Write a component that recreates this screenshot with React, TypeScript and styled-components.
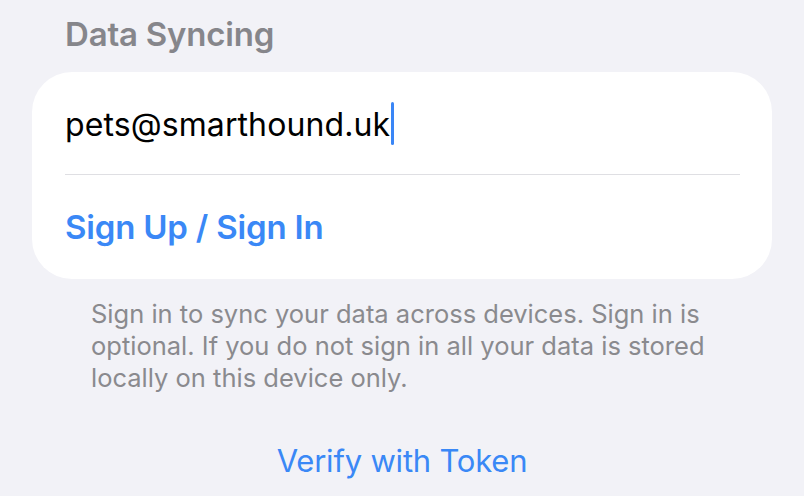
import styled, { createGlobalStyle } from "styled-components";

const GlobalStyle = createGlobalStyle`
  html, body {
    margin: 0;
    padding: 0;
    background: #f2f2f7;
  }
  body {
    font-family: "Inter", "Noto Sans", "Liberation Sans", sans-serif;
    -webkit-font-smoothing: antialiased;
  }
`;

const Page = styled.div`
  width: 804px;
  height: 496px;
  box-sizing: border-box;
  padding: 14px 32px 0;
  display: flex;
  flex-direction: column;
  overflow: hidden;
`;

const SectionTitle = styled.h2`
  margin: 0 0 18px;
  padding-left: 33px;
  font-size: 33px;
  line-height: 40px;
  font-weight: 600;
  color: #86868b;
  letter-spacing: -0.2px;
`;

const Card = styled.div`
  background: #ffffff;
  border-radius: 40px;
  padding: 0 32px 0 33px;
  display: flex;
  flex-direction: column;
`;

const Row = styled.div<{ $divider?: boolean }>`
  height: ${(p) => (p.$divider ? 102 : 104)}px;
  display: flex;
  align-items: center;
  border-bottom: ${(p) => (p.$divider ? "1px solid #dfdfe3" : "none")};
`;

const EmailText = styled.span`
  font-size: 32px;
  color: #000;
  letter-spacing: 0.1px;
  display: flex;
  align-items: center;
  padding-top: 3px;
`;

const Caret = styled.span`
  display: inline-block;
  width: 3px;
  height: 43px;
  margin-left: 1px;
  margin-top: -3px;
  border-radius: 2px;
  background: #3a86f6;
`;

const LinkButton = styled.button`
  border: none;
  background: none;
  padding: 0;
  font-family: inherit;
  font-size: 33px;
  font-weight: 600;
  color: #3a88f6;
  letter-spacing: -0.2px;
  cursor: pointer;
`;

const Footer = styled.p`
  margin: 19px 0 0;
  padding-left: 59px;
  font-size: 25.5px;
  line-height: 32px;
  color: #8a8a8e;
  letter-spacing: 0;
`;

const CenterAction = styled.button`
  margin-top: 47px;
  align-self: center;
  border: none;
  background: none;
  padding: 0;
  font-family: inherit;
  font-size: 31px;
  line-height: 40px;
  color: #3a88f6;
  letter-spacing: -0.2px;
  cursor: pointer;
`;

export default function App() {
  return (
    <>
      <GlobalStyle />
      <Page>
        <SectionTitle>Data Syncing</SectionTitle>
        <Card>
          <Row $divider>
            <EmailText>
              pets@smarthound.uk
              <Caret />
            </EmailText>
          </Row>
          <Row>
            <LinkButton>Sign Up / Sign In</LinkButton>
          </Row>
        </Card>
        <Footer>
          Sign in to sync your data across devices. Sign in is
          <br />
          optional. If you do not sign in all your data is stored
          <br />
          locally on this device only.
        </Footer>
        <CenterAction>Verify with Token</CenterAction>
      </Page>
    </>
  );
}
